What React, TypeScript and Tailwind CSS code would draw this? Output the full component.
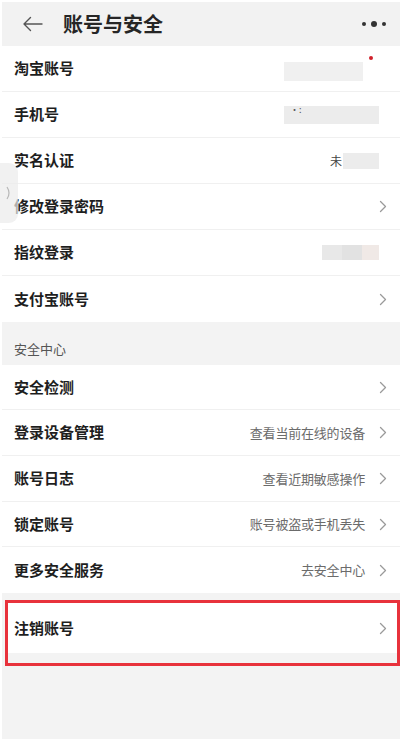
import React from 'react'

const font = { fontFamily: '"Noto Sans CJK SC", "Noto Sans", sans-serif' }

function Chevron() {
  return (
    <svg width="8" height="13" viewBox="0 0 8 13" className="shrink-0">
      <path d="M1.5 1.5 L6.5 6.5 L1.5 11.5" fill="none" stroke="#9a9a9a" strokeWidth="1.3" strokeLinecap="round" strokeLinejoin="round" />
    </svg>
  )
}

type RowProps = {
  title: string
  sub?: string
  arrow?: boolean
  right?: React.ReactNode
  last?: boolean
  height?: string
}

function Row({ title, sub, arrow, right, last, height = 'h-[46px]' }: RowProps) {
  return (
    <div className={`flex items-center bg-white pl-3 pr-[13px] ${height} ${last ? '' : 'border-b border-[#f0f0f0]'}`}>
      <span className="text-[15px] font-bold text-[#1e1e1e]">{title}</span>
      <div className="ml-auto flex items-center gap-[14px]">
        {sub && <span className="text-[13px] text-[#6b6b6b] tracking-[-0.2px]">{sub}</span>}
        {right}
        {arrow && <Chevron />}
      </div>
    </div>
  )
}

export default function App() {
  return (
    <div className="relative w-[400px] h-[742px] bg-white pl-[2px] pt-[2px] pb-[3px] overflow-hidden" style={font}>
      <div className="h-full bg-[#f3f3f3] flex flex-col">
        {/* header */}
        <div className="h-[44px] flex items-center pl-[20px] pr-[14px] bg-[#f2f2f2]">
          <svg width="22" height="16" viewBox="0 0 22 16">
            <path d="M20 8 H2 M8.5 1.5 L2 8 L8.5 14.5" fill="none" stroke="#555" strokeWidth="1.4" strokeLinecap="round" strokeLinejoin="round" />
          </svg>
          <span className="ml-[19px] text-[20px] font-bold text-[#262626]">账号与安全</span>
          <div className="ml-auto flex items-center gap-[5px]">
            <span className="w-[4px] h-[4px] rounded-full bg-[#333]" />
            <span className="w-[6px] h-[6px] rounded-full bg-[#333]" />
            <span className="w-[4px] h-[4px] rounded-full bg-[#333]" />
          </div>
        </div>

        <Row
          title="淘宝账号"
          right={
            <div className="flex items-start mr-[14px]">
              <div className="w-[79px] h-[19px] mt-[6px] bg-[#ececec] opacity-80" />
              <span className="w-[4px] h-[4px] rounded-full bg-[#d0202a] ml-[6px]" />
            </div>
          }
        />
        <Row
          title="手机号"
          right={
            <div className="relative w-[95px] h-[18px] bg-[#ececec] mr-[8px]">
              <span className="absolute left-[6px] -top-[3px] text-[9px] text-[#555]">·:</span>
            </div>
          }
        />
        <Row
          title="实名认证"
          right={
            <div className="flex items-center mr-[8px]">
              <span className="text-[12px] text-[#444]">未</span>
              <div className="w-[36px] h-[16px] bg-[#ececec] ml-[1px]" />
            </div>
          }
        />
        <Row title="修改登录密码" arrow />
        <Row
          title="指纹登录"
          right={
            <div className="flex mr-[8px]">
              <div className="w-[20px] h-[15px] bg-[#e8e8e8]" />
              <div className="w-[20px] h-[15px] bg-[#e2e2e2]" />
              <div className="w-[17px] h-[15px] bg-[#f0e9e6]" />
            </div>
          }
        />
        <Row title="支付宝账号" arrow last />

        <div className="h-[43px] flex items-center pl-3 pt-[10px] text-[13px] text-[#555]">安全中心</div>

        <Row title="安全检测" arrow height="h-[45px]" />
        <Row title="登录设备管理" sub="查看当前在线的设备" arrow />
        <Row title="账号日志" sub="查看近期敏感操作" arrow />
        <Row title="锁定账号" sub="账号被盗或手机丢失" arrow height="h-[45px]" />
        <Row title="更多安全服务" sub="去安全中心" arrow last />

        <div className="mt-[7px] ml-[3px] border-[3px] border-[#e8323c] h-[66px] flex flex-col">
          <div className="h-[50px] bg-white flex items-center pl-[6px] pr-[10px]">
            <span className="text-[15px] font-bold text-[#1e1e1e]">注销账号</span>
            <div className="ml-auto">
              <Chevron />
            </div>
          </div>
        </div>
      </div>

      {/* floating side handle */}
      <div className="absolute left-0 top-[163px] w-[18px] h-[60px] bg-[#ececec] opacity-70 rounded-r-[9px] flex items-center justify-center">
        <svg width="6" height="14" viewBox="0 0 6 14">
          <path d="M1 1 Q5 7 1 13" fill="none" stroke="#999" strokeWidth="1.2" />
        </svg>
      </div>
    </div>
  )
}
